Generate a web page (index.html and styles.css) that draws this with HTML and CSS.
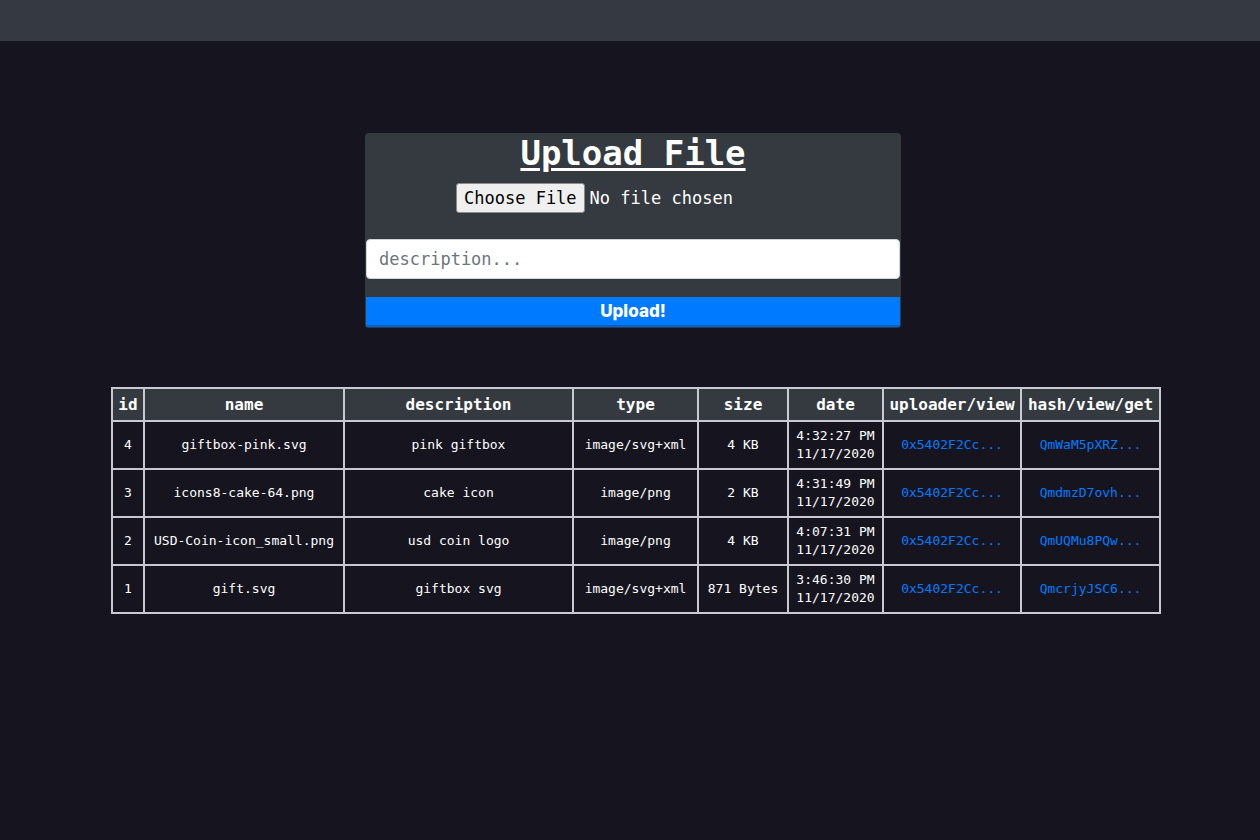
FILE: index.html
```html
<!DOCTYPE html>
<html>
<head>
<meta charset="utf-8">
<link rel="stylesheet" href="styles.css">
</head>
<body>
<nav class="navbar"></nav>
<main class="main">
  <section class="card">
    <h1 class="title">Upload File</h1>
    <div class="file-row">
      <span class="file-btn">Choose File</span>
      <span class="file-label">No file chosen</span>
    </div>
    <input class="desc-input" type="text" placeholder="description...">
    <button class="upload-btn">Upload!</button>
  </section>

  <table class="files">
    <colgroup>
      <col class="c-id"><col class="c-name"><col class="c-desc"><col class="c-type">
      <col class="c-size"><col class="c-date"><col class="c-up"><col class="c-hash">
    </colgroup>
    <thead>
      <tr><th>id</th><th>name</th><th>description</th><th>type</th><th>size</th><th>date</th><th>uploader/view</th><th>hash/view/get</th></tr>
    </thead>
    <tbody>
      <tr><td>4</td><td>giftbox-pink.svg</td><td>pink giftbox</td><td>image/svg+xml</td><td>4 KB</td><td>4:32:27 PM<br>11/17/2020</td><td><a href="#">0x5402F2Cc...</a></td><td><a href="#">QmWaM5pXRZ...</a></td></tr>
      <tr><td>3</td><td>icons8-cake-64.png</td><td>cake icon</td><td>image/png</td><td>2 KB</td><td>4:31:49 PM<br>11/17/2020</td><td><a href="#">0x5402F2Cc...</a></td><td><a href="#">QmdmzD7ovh...</a></td></tr>
      <tr><td>2</td><td>USD-Coin-icon_small.png</td><td>usd coin logo</td><td>image/png</td><td>4 KB</td><td>4:07:31 PM<br>11/17/2020</td><td><a href="#">0x5402F2Cc...</a></td><td><a href="#">QmUQMu8PQw...</a></td></tr>
      <tr><td>1</td><td>gift.svg</td><td>giftbox svg</td><td>image/svg+xml</td><td>871 Bytes</td><td>3:46:30 PM<br>11/17/2020</td><td><a href="#">0x5402F2Cc...</a></td><td><a href="#">QmcrjyJSC6...</a></td></tr>
    </tbody>
  </table>
</main>
</body>
</html>
```
FILE: styles.css
```css
* { box-sizing: border-box; }
html, body {
  margin: 0;
  padding: 0;
  background: #16151f;
  color: #fff;
  font-family: "DejaVu Sans Mono", "Liberation Mono", monospace;
}
.navbar {
  height: 41px;
  background: #353a42;
}
.main {
  padding: 92px 0 0 111px;
}
.card {
  width: 536px;
  margin-left: 254px;
  background: #343a40;
  border-radius: 4px;
  padding: 0 1px 1px;
  display: flex;
  flex-direction: column;
}
.title {
  margin: 0;
  font-size: 34px;
  line-height: 40px;
  font-weight: bold;
  text-align: center;
  text-decoration: underline;
  text-decoration-thickness: 3px;
  text-underline-offset: 3px;
}
.file-row {
  margin-top: 10px;
  padding-left: 90px;
  display: flex;
  align-items: center;
  gap: 5px;
  font-size: 17px;
}
.file-btn {
  display: inline-block;
  height: 30px;
  line-height: 28px;
  padding: 0 7px;
  background: #efefef;
  color: #000;
  border: 1px solid #8a8a8a;
  border-radius: 3px;
}
.file-label { color: #fff; }
.desc-input {
  margin-top: 26px;
  height: 40px;
  width: 100%;
  border: 1px solid #ced4da;
  border-radius: 4px;
  background: #fff;
  padding: 0 12px;
  font-family: "DejaVu Sans Mono", "Liberation Mono", monospace;
  font-size: 17px;
  color: #495057;
  outline: none;
}
.desc-input::placeholder { color: #6c757d; }
.upload-btn {
  margin-top: 18px;
  height: 30px;
  width: 100%;
  border: none;
  border-bottom: 2px solid #0062cc;
  background: #007bff;
  color: #fff;
  font-family: "Inter", "Open Sans", sans-serif;
  font-weight: 800;
  font-size: 17px;
  padding: 0;
  line-height: 28px;
}
.files {
  margin-top: 59px;
  width: 1048px;
  table-layout: fixed;
  border-collapse: collapse;
  border: 2px solid #c9c9d1;
}
.c-id { width: 32px; }
.c-name { width: 200px; }
.c-desc { width: 229px; }
.c-type { width: 125px; }
.c-size { width: 90px; }
.c-date { width: 95px; }
.c-up { width: 138px; }
.c-hash { width: 139px; }
.files th, .files td {
  border: 2px solid #c9c9d1;
  text-align: center;
  padding: 0;
}
.files th {
  background: #343a40;
  font-size: 16px;
  font-weight: bold;
  height: 33px;
  line-height: 19px;
}
.files td {
  font-size: 13px;
  line-height: 18px;
  height: 48px;
}
.files a {
  color: #007bff;
  text-decoration: none;
}
```
